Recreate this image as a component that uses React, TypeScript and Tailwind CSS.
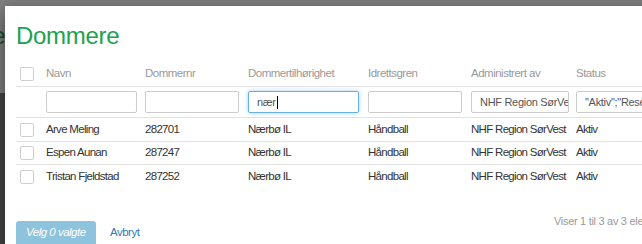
import React from "react";

const GRID = "grid grid-cols-[26px_99px_103px_120px_103px_105px_1fr]";
const FONT = "font-['Liberation_Sans',Arial,sans-serif]";

const Checkbox = () => (
  <div className="w-[14px] h-[14px] border border-[#cfcfcf] rounded-[2px] bg-white" />
);

const headers = ["Navn", "Dommernr", "Dommertilhørighet", "Idrettsgren", "Administrert av", "Status"];

const filters = [
  { w: "w-[91px]", value: "", focus: false },
  { w: "w-[94px]", value: "", focus: false },
  { w: "w-[111px]", value: "nær", focus: true },
  { w: "w-[94px]", value: "", focus: false },
  { w: "w-[98px]", value: "NHF Region SørVest", focus: false },
  { w: "w-[120px]", value: '"Aktiv";"Reservert"', focus: false },
];

const rows = [
  { name: "Arve Meling", nr: "282701", h: "h-[24px] border-b border-[#e2e2e2]" },
  { name: "Espen Aunan", nr: "287247", h: "h-[23px] border-b border-[#e2e2e2]" },
  { name: "Tristan Fjeldstad", nr: "287252", h: "h-[23px]" },
];

export default function App() {
  return (
    <div className={`relative w-[642px] h-[244px] overflow-hidden bg-white ${FONT}`}>
      {/* page behind the dialog */}
      <div className="flex flex-col h-full">
        <div className="h-[93px] bg-white pt-[22px]">
          <div className="ml-[-98px] text-[24px] leading-[27px] tracking-[-0.3px] text-[#20a14f] whitespace-nowrap">
            Dommere
          </div>
        </div>
        <div className="flex-1 bg-[#8a8a8a]" />
      </div>
      {/* backdrop */}
      <div className="absolute inset-0 bg-black/50" />
      {/* dialog */}
      <div className="absolute left-[5px] top-[6px] w-[691px] h-[270px] bg-white shadow-[0_5px_15px_rgba(0,0,0,0.5)] pl-[11px] pr-[12px] pt-[16px]">
        <div className="text-[24px] leading-[27px] tracking-[-0.3px] text-[#20a14f]">Dommere</div>

        <div className="mt-[13px] text-[11.5px]">
          {/* header */}
          <div className={`${GRID} h-[25px] border-b border-[#e2e2e2] items-center text-[#999] tracking-[-0.5px]`}>
            <div className="pl-[4px]">
              <Checkbox />
            </div>
            {headers.map((h) => (
              <div key={h} className="pl-[4px] whitespace-nowrap">
                {h}
              </div>
            ))}
          </div>
          {/* filters */}
          <div className={`${GRID} h-[31px] border-b border-[#e2e2e2] items-center`}>
            <div />
            {filters.map((f, i) => (
              <div key={i} className="pl-[4px]">
                <div
                  className={`${f.w} h-[22px] rounded-[2px] border bg-white flex items-center pl-[8px] pr-[1px] overflow-hidden whitespace-nowrap text-[#555] text-[11px] tracking-[-0.3px] ${
                    f.focus
                      ? "border-[#66afe9] shadow-[0_0_4px_rgba(102,175,233,0.6)]"
                      : "border-[#cccccc]"
                  }`}
                >
                  <span>{f.value}</span>
                  {f.focus && <span className="w-px h-[13px] bg-black ml-px" />}
                </div>
              </div>
            ))}
          </div>
          {/* data rows */}
          {rows.map((r) => (
            <div key={r.nr} className={`${GRID} ${r.h} items-center text-[#333] tracking-[-0.7px]`}>
              <div className="pl-[4px]">
                <Checkbox />
              </div>
              <div className="pl-[4px] whitespace-nowrap">{r.name}</div>
              <div className="pl-[4px] whitespace-nowrap">{r.nr}</div>
              <div className="pl-[4px] whitespace-nowrap">Nærbø IL</div>
              <div className="pl-[4px] whitespace-nowrap">Håndball</div>
              <div className="pl-[4px] whitespace-nowrap">NHF Region SørVest</div>
              <div className="pl-[4px] whitespace-nowrap">Aktiv</div>
            </div>
          ))}
        </div>

        {/* footer */}
        <div className="mt-[27px] flex items-start">
          <div className="w-[538px] shrink-0 mt-[6px] flex items-start">
            <div className="w-[80px] h-[30px] rounded-[3px] bg-[#8dc3dc] pl-[10px] pt-[5px] text-[11.5px] leading-[13px] tracking-[-0.5px] italic text-white whitespace-nowrap">
              Velg 0 valgte
            </div>
            <div className="ml-[14px] pt-[5px] text-[11.5px] leading-[13px] tracking-[-0.5px] text-[#337ab7]">
              Avbryt
            </div>
          </div>
          <div className="text-[11px] leading-[12px] tracking-[-0.3px] text-[#9a9a9a] whitespace-nowrap">
            Viser 1 til 3 av 3 elementer
          </div>
        </div>
      </div>
    </div>
  );
}
